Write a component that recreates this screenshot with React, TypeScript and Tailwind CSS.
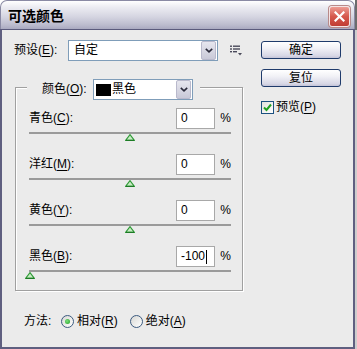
import React from "react";

const font = "font-['Liberation_Sans','Noto_Sans_CJK_SC',sans-serif]";

function K({ c }: { c: string }) {
  return <span className="underline underline-offset-[2px] decoration-1">{c}</span>;
}

function Label({ text, k }: { text: string; k: string }) {
  return (
    <span className="whitespace-nowrap">
      {text}(<K c={k} />):
    </span>
  );
}

function DropBtn() {
  return (
    <div className="w-[15px] h-[19px] mr-px rounded-[2px] border border-[#b9b9cc] bg-[linear-gradient(to_bottom,#e6e6ee,#c9c9d8)] flex items-center justify-center">
      <svg width="8" height="5" viewBox="0 0 8 5">
        <path d="M0.8 0.8 L4 3.8 L7.2 0.8" stroke="#2a2a3a" strokeWidth="1.6" fill="none" />
      </svg>
    </div>
  );
}

function Thumb() {
  return (
    <svg width="10" height="7" viewBox="0 0 10 7">
      <polygon points="5,0.6 9.4,6.4 0.6,6.4" fill="#c8ecc4" stroke="#2f9a37" strokeWidth="1.1" />
      <line x1="1" y1="6.4" x2="9" y2="6.4" stroke="#1e7a26" strokeWidth="1.2" />
    </svg>
  );
}

function SliderRow({ text, k, value, left, caret }: { text: string; k: string; value: string; left?: boolean; caret?: boolean }) {
  return (
    <div className="flex flex-col">
      <div className="flex items-center h-[21px]">
        <span className="flex-1">
          <Label text={text} k={k} />
        </span>
        <div className="w-[39px] h-[21px] border border-[#a8a8a8] bg-white pl-[4px] flex items-center">
          <span>{value}</span>
          {caret && <span className="ml-px w-px h-[14px] bg-black" />}
        </div>
        <span className="w-[16px] text-right">%</span>
      </div>
      <div className="mt-[3px] h-[2px] bg-[#9a9a9a]" />
      <div className={left ? "h-[7px] flex justify-start -ml-[4px]" : "h-[7px] flex justify-center"}>
        <Thumb />
      </div>
    </div>
  );
}

function XPButton({ children }: { children: React.ReactNode }) {
  return (
    <div className="w-[80px] h-[18px] rounded-[3px] border border-[#1f3b6b] bg-[linear-gradient(to_bottom,#ffffff,#f1f1f6_40%,#d8d8e6_85%,#c4c4d8)] flex items-center justify-center leading-[15px]">
      {children}
    </div>
  );
}

function Radio({ checked }: { checked?: boolean }) {
  return (
    <div className="w-[13px] h-[13px] rounded-full border border-[#3c5b80] bg-[linear-gradient(135deg,#d8d8d4,#ffffff)] flex items-center justify-center">
      {checked && <div className="w-[5px] h-[5px] rounded-full bg-[radial-gradient(circle_at_40%_40%,#7be07b,#1e9e24)]" />}
    </div>
  );
}

export default function App() {
  return (
    <div className={`w-[357px] h-[349px] flex bg-white overflow-hidden text-[12px] leading-[15px] text-black ${font}`}>
      <div className="w-[355px] h-[349px] flex flex-col">
        {/* title bar */}
        <div className="h-[29px] rounded-t-[7px] border border-b-0 border-[#8a8aa4] bg-[linear-gradient(to_bottom,#ffffff_0%,#ececf2_22%,#d6d6e2_55%,#bcbcce_85%,#a9a9c0_100%)] flex items-start">
          <div className="flex-1 pl-[7px] pt-[5px] text-[14px] leading-[20px] font-bold">可选颜色</div>
          <div className="mt-[5px] mr-[4px] w-[21px] h-[21px] rounded-[3px] border border-[#f4e4e4] bg-[linear-gradient(to_bottom,#ec9c94,#d6584c_50%,#c03c34)] flex items-center justify-center shadow-[0_0_0_1px_#b88a8a]">
            <svg width="11" height="11" viewBox="0 0 11 11">
              <path d="M1.5 1.5 L9.5 9.5 M9.5 1.5 L1.5 9.5" stroke="#ffffff" strokeWidth="2.2" strokeLinecap="square" />
            </svg>
          </div>
        </div>
        <div className="h-px bg-[#5a5a7c]" />
        {/* body */}
        <div className="flex-1 bg-[#ebebeb] border-x-2 border-b-2 border-[#5f5f80] flex">
          <div className="ml-[12px] w-[229px] flex flex-col">
            {/* preset row */}
            <div className="mt-[10px] h-[21px] flex items-center">
              <span className="w-[54px]">
                <Label text="预设" k="E" />
              </span>
              <div className="w-[150px] h-[21px] border border-[#7f9db9] bg-white flex items-center">
                <span className="flex-1 pl-[5px]">自定</span>
                <DropBtn />
              </div>
              <svg className="ml-[12px]" width="12" height="11" viewBox="0 0 12 11">
                <rect x="0" y="0.5" width="2" height="1.4" fill="#4a4a5a" />
                <rect x="3" y="0.5" width="7" height="1.4" fill="#4a4a5a" />
                <rect x="0" y="3.3" width="2" height="1.4" fill="#4a4a5a" />
                <rect x="3" y="3.3" width="7" height="1.4" fill="#4a4a5a" />
                <rect x="0" y="6" width="2" height="1.4" fill="#4a4a5a" />
                <rect x="3" y="6" width="4" height="1.4" fill="#4a4a5a" />
                <polygon points="8,8 12,8 10,10.5" fill="#4a4a5a" />
              </svg>
            </div>
            {/* group box */}
            <div className="ml-px mt-[26px] w-[228px] h-[204px] border border-[#a0a0a0] shadow-[inset_1px_1px_0_#ffffff,1px_1px_0_#ffffff] flex flex-col">
              <div className="-mt-[9px] ml-[11px] self-start h-[21px] bg-[#ebebeb] pl-[15px] pr-[7px] flex items-center">
                <span className="w-[51px]">
                  <Label text="颜色" k="O" />
                </span>
                <div className="w-[100px] h-[21px] border border-[#7f9db9] bg-white flex items-center">
                  <div className="ml-[2px] w-[15px] h-[12px] bg-black" />
                  <span className="flex-1 ml-px">黑色</span>
                  <DropBtn />
                </div>
              </div>
              <div className="mt-[8px] pl-[13px] pr-[11px] flex flex-col gap-[13px]">
                <SliderRow text="青色" k="C" value="0" />
                <SliderRow text="洋红" k="M" value="0" />
                <SliderRow text="黄色" k="Y" value="0" />
                <SliderRow text="黑色" k="B" value="-100" left caret />
              </div>
            </div>
            {/* method */}
            <div className="mt-[24px] ml-[10px] h-[13px] flex items-center">
              <span className="w-[37px]">方法:</span>
              <Radio checked />
              <span className="ml-[3px]">
                相对(<K c="R" />)
              </span>
              <span className="ml-[12px]">
                <Radio />
              </span>
              <span className="ml-[3px]">
                绝对(<K c="A" />)
              </span>
            </div>
          </div>
          <div className="ml-[18px] mt-[11px] w-[80px] flex flex-col">
            <XPButton>确定</XPButton>
            <div className="mt-[10px]">
              <XPButton>复位</XPButton>
            </div>
            <div className="mt-[14px] h-[13px] flex items-center">
              <div className="w-[13px] h-[13px] border border-[#1c5180] bg-[linear-gradient(135deg,#e2e2dc,#ffffff)] flex items-center justify-center">
                <svg width="9" height="9" viewBox="0 0 9 9">
                  <path d="M1 4.5 L3.5 7 L8 1.5" stroke="#21a121" strokeWidth="2" fill="none" />
                </svg>
              </div>
              <span className="ml-[2px] whitespace-nowrap">
                预览(<K c="P" />)
              </span>
            </div>
          </div>
        </div>
      </div>
      <div className="w-[2px] flex flex-col">
        <div className="h-[30px] bg-[#6c6c6c]" />
        <div className="flex-1 bg-[#cdcdcd]" />
      </div>
    </div>
  );
}
